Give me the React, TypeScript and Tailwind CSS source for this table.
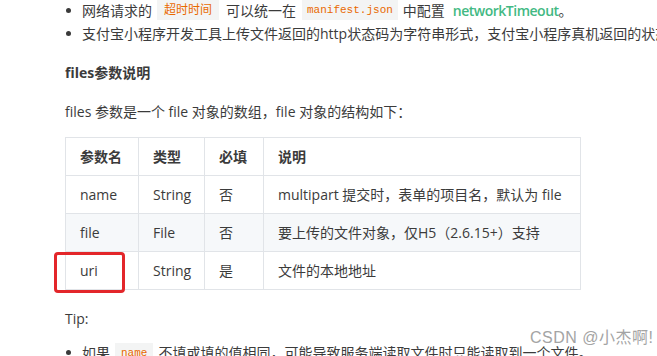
import React from "react";

const font = { fontFamily: '"Segoe UI","Open Sans","Noto Sans CJK SC",sans-serif' };

function Dot() {
  return <span className="inline-block w-[5px] h-[5px] rounded-full bg-[#3a3a3a] mr-[11px] ml-[1px] shrink-0" />;
}

export default function App() {
  const rows = [
    { n: "name", t: "String", r: "否", d: "multipart 提交时，表单的项目名，默认为 file", bg: "bg-white" },
    { n: "file", t: "File", r: "否", d: "要上传的文件对象，仅H5（2.6.15+）支持", bg: "bg-[#f6f8fa]" },
    { n: "uri", t: "String", r: "是", d: "文件的本地地址", bg: "bg-white" },
  ];
  return (
    <div
      className="relative w-[657px] h-[356px] overflow-hidden bg-white text-[14px] text-[#3b3b3b] whitespace-nowrap [text-spacing-trim:space-all]"
      style={font}
    >
      <div className="pl-[65px]">
        <ul className="mt-[-1.5px] leading-[23px]">
          <li className="flex items-center">
            <Dot />
            <span>网络请求的</span>
            <span className="ml-[5px] mr-[7px] px-[7px] bg-[#f3f4f4] text-[#e96900] text-[12px] leading-[20px]">超时时间</span>
            <span>可以统一在</span>
            <span
              className="ml-[6px] mr-[5px] px-[5px] bg-[#f3f4f4] text-[#e96900] text-[11px] leading-[20px]"
              style={{ fontFamily: '"Liberation Mono",monospace' }}
            >
              manifest.json
            </span>
            <span>中配置</span>
            <span className="ml-[8px] text-[#42b983] font-semibold tracking-[-0.5px]">networkTimeout</span>
            <span>。</span>
          </li>
          <li className="flex items-center">
            <Dot />
            <span>支付宝小程序开发工具上传文件返回的http状态码为字符串形式，支付宝小程序真机返回的状态码为数字形式</span>
          </li>
        </ul>
        <div className="mt-[17.5px] leading-[22px] font-bold">files参数说明</div>
        <div className="mt-[17px] leading-[22px]">files 参数是一个 file 对象的数组，file 对象的结构如下：</div>
        <table className="mt-[14px] border-collapse table-fixed w-[515px]">
          <colgroup>
            <col className="w-[73px]" />
            <col className="w-[66px]" />
            <col className="w-[59px]" />
            <col className="w-[317px]" />
          </colgroup>
          <thead>
            <tr className="h-[38px] bg-white">
              {["参数名", "类型", "必填", "说明"].map((h) => (
                <th key={h} className="border border-[#e1e4e8] px-[14px] text-left font-bold">
                  {h}
                </th>
              ))}
            </tr>
          </thead>
          <tbody>
            {rows.map((r) => (
              <tr key={r.n} className={`h-[38px] ${r.bg}`}>
                <td className="border border-[#e1e4e8] px-[14px]">{r.n}</td>
                <td className="border border-[#e1e4e8] px-[14px]">{r.t}</td>
                <td className="border border-[#e1e4e8] px-[14px]">{r.r}</td>
                <td className="border border-[#e1e4e8] px-[14px]">{r.d}</td>
              </tr>
            ))}
          </tbody>
        </table>
        <div className="mt-[18px] leading-[22px]">Tip:</div>
        <ul className="mt-[11px] leading-[23px]">
          <li className="flex items-center">
            <Dot />
            <span>如果</span>
            <span
              className="ml-[5px] mr-[5px] px-[6px] bg-[#f3f4f4] text-[#e96900] text-[11px] leading-[20px]"
              style={{ fontFamily: '"Liberation Mono",monospace' }}
            >
              name
            </span>
            <span>不填或填的值相同，可能导致服务端读取文件时只能读取到一个文件。</span>
          </li>
        </ul>
      </div>

      <div className="absolute left-[54px] top-[252px] w-[71px] h-[41px] border-[3px] border-[#e3262a] rounded-[4px]" />
      <div
        className="absolute left-[530px] top-[327px] text-[16px] leading-[22px] text-[#a4a4a4] tracking-[0.5px]"
        style={{ fontFamily: '"Liberation Sans","Noto Sans CJK SC",sans-serif' }}
      >
        CSDN @小杰啊!
      </div>
    </div>
  );
}
